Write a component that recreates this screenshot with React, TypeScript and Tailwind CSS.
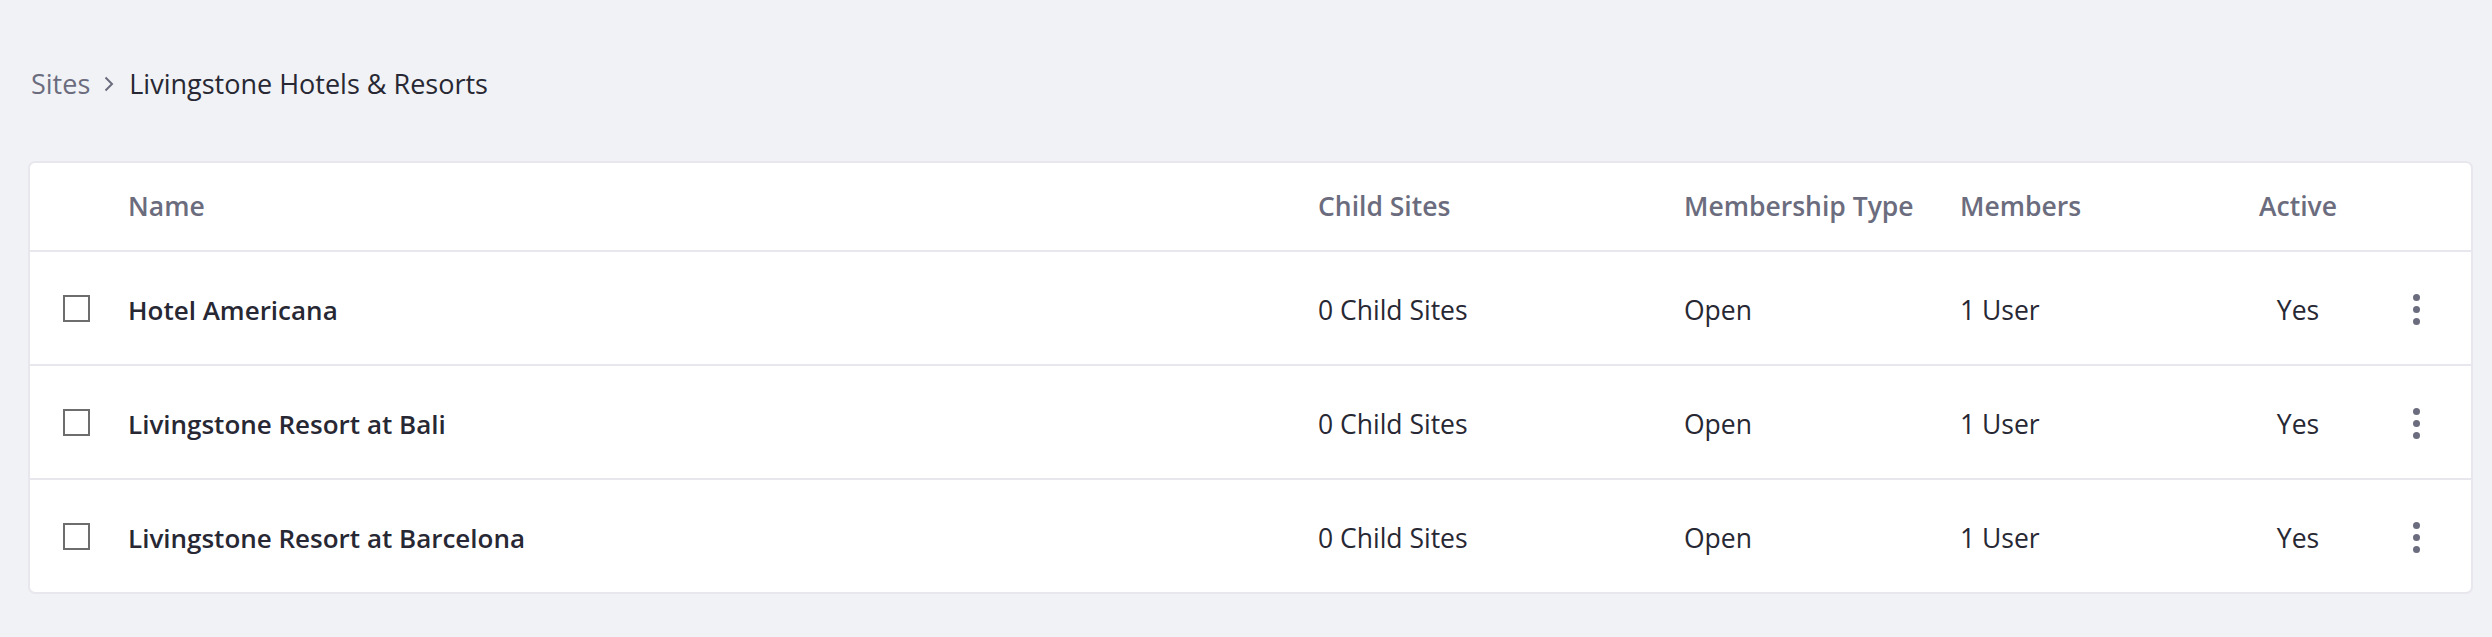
import React from "react";

type Site = {
  name: string;
  childSites: string;
  membership: string;
  members: string;
  active: string;
};

const sites: Site[] = [
  { name: "Hotel Americana", childSites: "0 Child Sites", membership: "Open", members: "1 User", active: "Yes" },
  { name: "Livingstone Resort at Bali", childSites: "0 Child Sites", membership: "Open", members: "1 User", active: "Yes" },
  { name: "Livingstone Resort at Barcelona", childSites: "0 Child Sites", membership: "Open", members: "1 User", active: "Yes" },
];

const cols = "grid grid-cols-[98px_1190px_366px_276px_260px_156px_1fr] items-center";

const Kebab: React.FC = () => (
  <button className="mt-[3px] flex flex-col items-center gap-[5px] py-1">
    <span className="size-[7px] rounded-full bg-[#6b6c7e]" />
    <span className="size-[7px] rounded-full bg-[#6b6c7e]" />
    <span className="size-[7px] rounded-full bg-[#6b6c7e]" />
  </button>
);

const App: React.FC = () => {
  return (
    <div className="min-h-screen bg-[#f1f2f5] font-['Open_Sans',sans-serif] text-[26.5px] text-[#272833]">
      <nav className="flex items-center pt-[66px] pl-[31px] text-[27px] leading-[36px]">
        <span className="text-[#6b6c7e]">Sites</span>
        <svg width="10" height="16" viewBox="0 0 10 16" className="ml-[14px] mr-[15px]" fill="none">
          <polyline points="1.5,1.5 8,8 1.5,14.5" stroke="#6b6c7e" strokeWidth="2" />
        </svg>
        <span>Livingstone Hotels &amp; Resorts</span>
      </nav>

      <div className="mt-[59px] ml-[28px] mr-[19px] rounded-[7px] border-2 border-[#e7e7ed] bg-white">
        <div className={`${cols} h-[87px] font-semibold text-[#6b6c7e]`}>
          <div />
          <div>Name</div>
          <div>Child Sites</div>
          <div>Membership Type</div>
          <div>Members</div>
          <div className="text-center">Active</div>
          <div />
        </div>
        {sites.map((s) => (
          <div key={s.name} className={`${cols} h-[114px] border-t-2 border-[#e7e7ed]`}>
            <div className="pl-[33px]">
              <div className="size-[27px] border-2 border-[#6d6d6d] bg-white" />
            </div>
            <div className="mt-[5px] text-[26px] font-semibold">{s.name}</div>
            <div className="mt-[5px]">{s.childSites}</div>
            <div className="mt-[5px]">{s.membership}</div>
            <div className="mt-[5px]">{s.members}</div>
            <div className="mt-[5px] text-center">{s.active}</div>
            <div className="pl-[37px]">
              <Kebab />
            </div>
          </div>
        ))}
      </div>
    </div>
  );
};

export default App;
